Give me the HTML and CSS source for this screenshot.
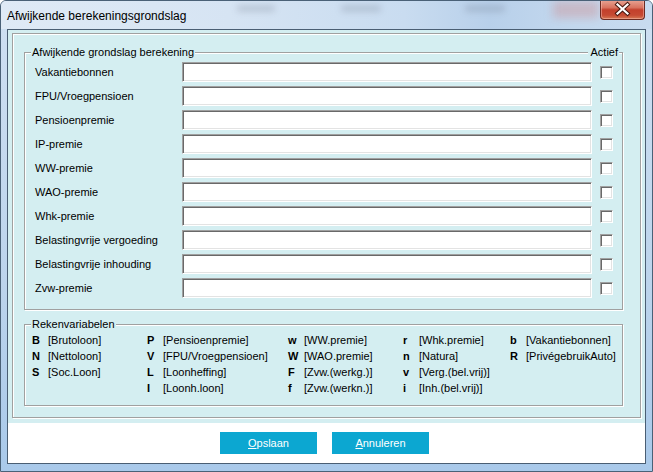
FILE: index.html
```html
<!DOCTYPE html>
<html>
<head>
<meta charset="utf-8">
<link rel="stylesheet" href="styles.css">
</head>
<body>
<div class="window">
  <div class="titlebar">
    <span class="title">Afwijkende berekeningsgrondslag</span>
    <span class="ghost ghost-1"></span>
    <span class="ghost ghost-2"></span>
    <span class="ghost ghost-3"></span>
    <span class="ghost-red"></span>
  </div>
  <div class="close">
    <svg width="45" height="20" viewBox="0 0 45 20">
      <path d="M17.5 5.5 L27.5 14.5 M27.5 5.5 L17.5 14.5" stroke="#4a1a12" stroke-width="4.2" stroke-linecap="square" fill="none"/>
      <path d="M17.5 5.5 L27.5 14.5 M27.5 5.5 L17.5 14.5" stroke="#ffffff" stroke-width="2.2" stroke-linecap="square" fill="none"/>
    </svg>
  </div>
  <div class="client">
    <div class="panel">
      <div class="etched">
        <div class="group group-main">
          <span class="legend">Afwijkende grondslag berekening</span>
          <span class="legend-right">Actief</span>
          <div class="row"><span class="label">Vakantiebonnen</span><span class="field"></span><span class="check"></span></div>
          <div class="row"><span class="label">FPU/Vroegpensioen</span><span class="field"></span><span class="check"></span></div>
          <div class="row"><span class="label">Pensioenpremie</span><span class="field"></span><span class="check"></span></div>
          <div class="row"><span class="label">IP-premie</span><span class="field"></span><span class="check"></span></div>
          <div class="row"><span class="label">WW-premie</span><span class="field"></span><span class="check"></span></div>
          <div class="row"><span class="label">WAO-premie</span><span class="field"></span><span class="check"></span></div>
          <div class="row"><span class="label">Whk-premie</span><span class="field"></span><span class="check"></span></div>
          <div class="row"><span class="label">Belastingvrije vergoeding</span><span class="field"></span><span class="check"></span></div>
          <div class="row"><span class="label">Belastingvrije inhouding</span><span class="field"></span><span class="check"></span></div>
          <div class="row"><span class="label">Zvw-premie</span><span class="field"></span><span class="check"></span></div>
        </div>
        <div class="group group-vars">
          <span class="legend">Rekenvariabelen</span>
          <div class="vars">
            <div class="var"><b>B</b><span>[Brutoloon]</span></div>
            <div class="var"><b>P</b><span>[Pensioenpremie]</span></div>
            <div class="var"><b>w</b><span>[WW.premie]</span></div>
            <div class="var"><b>r</b><span>[Whk.premie]</span></div>
            <div class="var"><b>b</b><span>[Vakantiebonnen]</span></div>

            <div class="var"><b>N</b><span>[Nettoloon]</span></div>
            <div class="var"><b>V</b><span>[FPU/Vroegpensioen]</span></div>
            <div class="var"><b>W</b><span>[WAO.premie]</span></div>
            <div class="var"><b>n</b><span>[Natura]</span></div>
            <div class="var"><b>R</b><span>[PrivégebruikAuto]</span></div>

            <div class="var"><b>S</b><span>[Soc.Loon]</span></div>
            <div class="var"><b>L</b><span>[Loonheffing]</span></div>
            <div class="var"><b>F</b><span>[Zvw.(werkg.)]</span></div>
            <div class="var"><b>v</b><span>[Verg.(bel.vrij)]</span></div>
            <div class="var"></div>

            <div class="var"></div>
            <div class="var"><b>I</b><span>[Loonh.loon]</span></div>
            <div class="var"><b>f</b><span>[Zvw.(werkn.)]</span></div>
            <div class="var"><b>i</b><span>[Inh.(bel.vrij)]</span></div>
            <div class="var"></div>
          </div>
        </div>
      </div>
    </div>
    <div class="footer">
      <button class="btn"><u>O</u>pslaan</button>
      <button class="btn"><u>A</u>nnuleren</button>
    </div>
  </div>
</div>
</body>
</html>
```

FILE: styles.css
```css
* { box-sizing: border-box; }
html, body { margin: 0; padding: 0; background: #ffffff; }

.window {
  position: relative;
  width: 653px;
  height: 472px;
  border: 1px solid #4a6177;
  border-radius: 6px 6px 0 0;
  background: linear-gradient(to bottom, #cfe0f2 0%, #bcd4ec 60%, #a9c9ea 100%);
  display: flex;
  flex-direction: column;
  overflow: hidden;
  font-family: "Liberation Sans", Arial, sans-serif;
  font-size: 11px;
  color: #000;
}

.titlebar {
  position: relative;
  height: 28px;
  flex: none;
  display: flex;
  align-items: center;
  padding-left: 6px;
  background: linear-gradient(to right, #dfeaf6 0%, #d6e4f3 35%, #c9dcf0 62%, #b8d0ea 75%, #c3d8ee 88%, #c8dbef 100%);
}
.title {
  font-family: "Liberation Sans", Arial, sans-serif;
  font-size: 12px;
  color: #000;
  margin-top: 1px;
}
.ghost {
  position: absolute;
  top: 4px;
  height: 7px;
  border-radius: 3px;
  background: rgba(70, 80, 95, 0.18);
  filter: blur(3px);
}
.ghost-1 { left: 236px; width: 38px; }
.ghost-2 { left: 340px; width: 40px; }
.ghost-3 { left: 464px; width: 40px; }
.ghost-red {
  position: absolute;
  top: 0;
  left: 552px;
  width: 46px;
  height: 17px;
  background: rgba(205, 130, 130, 0.35);
  filter: blur(4px);
}

.close {
  position: absolute;
  top: -1px;
  right: 7px;
  width: 45px;
  height: 20px;
  border: 1px solid #6b2b22;
  border-top: none;
  border-radius: 0 0 4px 4px;
  background: linear-gradient(to bottom, #e9a595 0%, #d9735f 40%, #c3402c 52%, #c64a33 80%, #d67a55 100%);
  box-shadow: inset 0 0 0 1px rgba(255, 200, 190, 0.45);
  overflow: hidden;
}
.close svg { display: block; margin: -1px 0 0 -1px; }

.client {
  flex: none;
  margin: 0 6px 7px 6px;
  height: 435px;
  border: 1px solid #4a5e73;
  background: #ffffff;
  display: flex;
  flex-direction: column;
}

.panel {
  height: 393px;
  flex: none;
  background: #d4eef1;
  padding: 3px 3px 0 4px;
}

.etched {
  width: 629px;
  height: 385px;
  border: 1px solid #a0a0a0;
  box-shadow: 1px 1px 0 #ffffff, inset 1px 1px 0 #ffffff;
  padding: 18px 0 0 11px;
}

.group {
  position: relative;
  width: 599px;
  border: 1px solid #a0a0a0;
  box-shadow: 1px 1px 0 #ffffff, inset 1px 1px 0 #ffffff;
}
.legend {
  position: absolute;
  top: -8px;
  left: 6px;
  padding: 0 1px;
  line-height: 14px;
  background: #d4eef1;
}
.legend-right {
  position: absolute;
  top: -8px;
  right: 3px;
  padding: 0 1px 0 2px;
  line-height: 14px;
  background: #d4eef1;
}

.group-main {
  height: 258px;
  padding: 9px 0 0 10px;
  display: flex;
  flex-direction: column;
  gap: 4px;
}
.row {
  height: 20px;
  display: flex;
  align-items: center;
}
.label {
  width: 147px;
  flex: none;
  line-height: 20px;
}
.field {
  width: 410px;
  height: 20px;
  flex: none;
  background: #ffffff;
  border: 1px solid;
  border-color: #a0a0a0 #ffffff #ffffff #a0a0a0;
  box-shadow: inset 1px 1px 0 #696969, inset -1px -1px 0 #e3e3e3;
}
.check {
  width: 13px;
  height: 13px;
  flex: none;
  margin-left: 8px;
  background: #ffffff;
  border: 1px solid;
  border-color: #a0a0a0 #ffffff #ffffff #a0a0a0;
  box-shadow: inset 1px 1px 0 #696969, inset -1px -1px 0 #e3e3e3;
}

.group-vars {
  margin-top: 14px;
  height: 82px;
  padding: 7px 0 0 7px;
}
.vars {
  display: grid;
  grid-template-columns: 115px 141px 115px 107px 1fr;
  grid-auto-rows: 16px;
}
.var {
  display: flex;
  align-items: center;
  line-height: 16px;
  white-space: nowrap;
}
.var b {
  width: 16px;
  flex: none;
  font-weight: bold;
}

.footer {
  flex: 1;
  background: #ffffff;
  display: flex;
  align-items: flex-start;
  gap: 15px;
  padding: 9px 0 0 212px;
}
.btn {
  width: 97px;
  height: 22px;
  border: none;
  padding: 0;
  margin: 0;
  background: #0ca7d1;
  color: #ffffff;
  font-family: "Liberation Sans", Arial, sans-serif;
  font-size: 11px;
  line-height: 22px;
  text-align: center;
}
.btn u { text-decoration: underline; text-underline-offset: 1px; }
```
